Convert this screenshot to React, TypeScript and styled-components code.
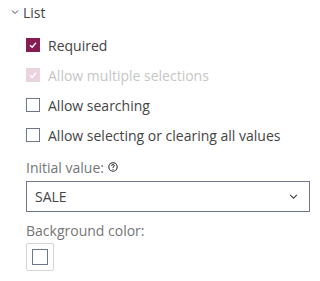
import React from 'react'
import styled, { createGlobalStyle } from 'styled-components'

const GlobalStyle = createGlobalStyle`
  body {
    margin: 0;
    background: #fff;
    font-family: "Open Sans", "Liberation Sans", sans-serif;
    color: #444;
  }
`

const Panel = styled.div`
  width: 313px;
  height: 281px;
  box-sizing: border-box;
  padding: 3px 4px 0 11px;
`

const SectionHeader = styled.div`
  display: flex;
  align-items: center;
  gap: 4px;
  height: 18px;
  font-size: 14px;
  color: #444;
`

const Body = styled.div`
  display: flex;
  flex-direction: column;
  padding: 9px 0 0 15px;
`

const CheckRow = styled.label<{ $disabled?: boolean }>`
  display: flex;
  align-items: center;
  gap: 8px;
  height: 30px;
  font-size: 14px;
  color: ${(p) => (p.$disabled ? '#c6c6c6' : '#444')};
`

const Box = styled.span<{ $checked?: boolean; $disabled?: boolean }>`
  width: 14px;
  height: 14px;
  box-sizing: border-box;
  display: flex;
  align-items: center;
  justify-content: center;
  border: 1px solid
    ${(p) =>
      p.$checked ? (p.$disabled ? '#ead3df' : '#861d52') : p.$disabled ? '#d0d4da' : '#6d7787'};
  background: ${(p) => (p.$checked ? (p.$disabled ? '#ead3df' : '#861d52') : '#fff')};
`

const FieldLabel = styled.div<{ $gap: number }>`
  display: flex;
  align-items: center;
  gap: 4px;
  margin-top: ${(p) => p.$gap}px;
  font-size: 14px;
  color: #767676;
  height: 18px;
`

const Select = styled.div`
  margin-top: 5px;
  height: 31px;
  width: 284px;
  box-sizing: border-box;
  border: 1px solid #6d7787;
  display: flex;
  align-items: center;
  justify-content: space-between;
  padding: 0 11px 0 8px;
  font-size: 14px;
  color: #444;
`

const Swatch = styled.div`
  margin-top: 4px;
  width: 28px;
  height: 28px;
  box-sizing: border-box;
  border: 1px solid #d6d6d6;
  border-radius: 2px;
  display: flex;
  align-items: center;
  justify-content: center;
`

const SwatchInner = styled.div`
  width: 16px;
  height: 16px;
  box-sizing: border-box;
  border: 1px solid #6d7787;
  background: #fff;
`

const Chevron = ({ size = 8, color = '#444' }: { size?: number; color?: string }) => (
  <svg width={size} height={size} viewBox="0 0 8 8">
    <path d="M1 2.5 L4 5.5 L7 2.5" fill="none" stroke={color} strokeWidth="1" />
  </svg>
)

const Check = () => (
  <svg width="10" height="10" viewBox="0 0 10 10">
    <path d="M2 5.2 L4.2 7.3 L8 2.8" fill="none" stroke="#fff" strokeWidth="1.4" />
  </svg>
)

const HelpIcon = () => (
  <svg width="10" height="10" viewBox="0 0 10 10">
    <circle cx="5" cy="5" r="4.2" fill="none" stroke="#2b2b2b" strokeWidth="1.1" />
    <path d="M3.6 4 Q3.6 2.6 5 2.6 Q6.4 2.6 6.4 3.8 Q6.4 4.6 5 5.1 L5 5.9" fill="none" stroke="#2b2b2b" strokeWidth="1" />
    <circle cx="5" cy="7.3" r="0.6" fill="#2b2b2b" />
  </svg>
)

const options = [
  { label: 'Required', checked: true },
  { label: 'Allow multiple selections', checked: true, disabled: true },
  { label: 'Allow searching' },
  { label: 'Allow selecting or clearing all values' },
]

export default function App() {
  return (
    <Panel>
      <GlobalStyle />
      <SectionHeader>
        <Chevron />
        List
      </SectionHeader>
      <Body>
        {options.map((o) => (
          <CheckRow key={o.label} $disabled={o.disabled}>
            <Box $checked={o.checked} $disabled={o.disabled}>
              {o.checked && <Check />}
            </Box>
            {o.label}
          </CheckRow>
        ))}
        <FieldLabel $gap={8}>
          Initial value:
          <HelpIcon />
        </FieldLabel>
        <Select>
          SALE
          <Chevron size={9} />
        </Select>
        <FieldLabel $gap={9}>Background color:</FieldLabel>
        <Swatch>
          <SwatchInner />
        </Swatch>
      </Body>
    </Panel>
  )
}
